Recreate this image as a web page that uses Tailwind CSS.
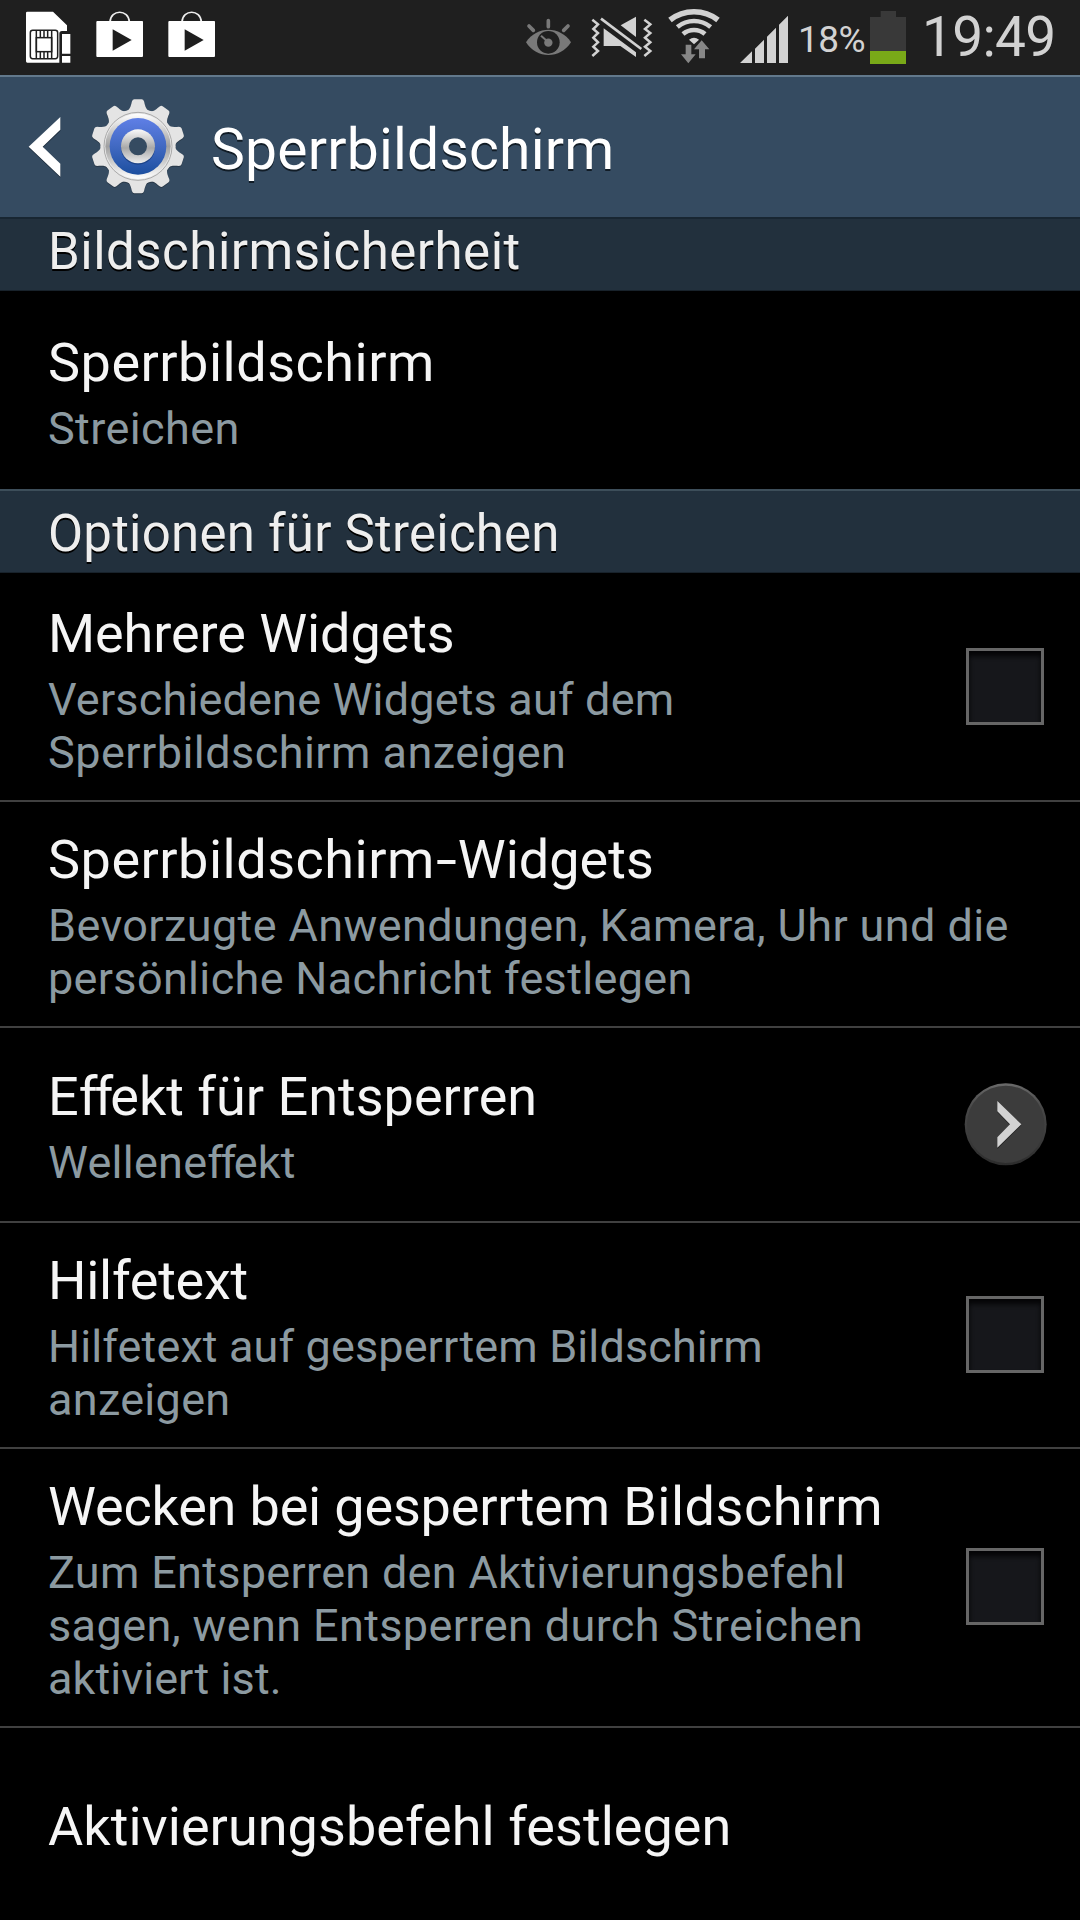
<!DOCTYPE html>
<html lang="de">
<head>
<meta charset="utf-8">
<title>Sperrbildschirm</title>
<script src="https://cdn.jsdelivr.net/npm/@tailwindcss/browser@4"></script>
</head>
<body class="bg-black">
<div class="w-[1080px] h-[1920px] overflow-hidden bg-black font-[Roboto,sans-serif] text-[#f5f5f5] flex flex-col">

  <!-- Status bar -->
  <div class="h-[75px] shrink-0 bg-[#1f1f1f] flex items-start text-[#d2d2d2]">
    <svg class="w-[90px] h-[75px]" viewBox="0 0 270 225">
      <path d="M82 35H159L201 76V93H186Q178 93 178 101V188H82Q78 188 78 184V39Q78 35 82 35Z" fill="#fff"/>
      <path d="M186 102H211V161H186ZM186 168H211V188H186Z" fill="#fff"/>
      <g fill="none" stroke="#1f1f1f" stroke-width="4.5"><rect x="91" y="91" width="82" height="85" rx="7"/><rect x="109" y="113" width="46" height="42"/><path d="M109 91V176M155 91V176M121 92V113M132 92V113M143 92V113M121 155V175M132 155V175M143 155V175"/></g>
    </svg>
    <svg class="w-[72px] h-[75px]" viewBox="270 0 216 225">
      <path d="M330 66C332 27 386 27 388 66" fill="none" stroke="#eee" stroke-width="5"/>
      <path d="M292 63H427Q429 63 429 66V168Q429 171 426 171H292Q289 171 289 168V66Q289 63 292 63ZM338 88V152L395 120Z" fill="#fff" fill-rule="evenodd"/>
    </svg>
    <svg class="w-[72px] h-[75px]" viewBox="270 0 216 225">
      <path d="M330 66C332 27 386 27 388 66" fill="none" stroke="#eee" stroke-width="5"/>
      <path d="M292 63H427Q429 63 429 66V168Q429 171 426 171H292Q289 171 289 168V66Q289 63 292 63ZM338 88V152L395 120Z" fill="#fff" fill-rule="evenodd"/>
    </svg>
    <svg class="w-[65px] h-[75px] ml-auto" viewBox="30 0 195 225">
      <path d="M48 127C80 77 151 77 183 127C151 178 80 178 48 127Z" fill="#797979"/>
      <circle cx="115" cy="127" r="34" fill="#1f1f1f"/>
      <circle cx="115" cy="128" r="12.5" fill="#797979"/>
      <path d="M110 122L93 107" stroke="#797979" stroke-width="6"/>
      <path d="M115 62V80M57 78L70 91M174 78L161 91" stroke="#797979" stroke-width="11" stroke-linecap="round"/>
    </svg>
    <svg class="w-[78px] h-[75px]" viewBox="225 0 234 225">
      <g fill="none" stroke="#d2d2d2" stroke-width="7.5"><path d="M247 59L264 73L250 87L264 99L250 113L264 127L250 140L264 153L247 168"/><path d="M403 59L421 73L405 87L421 99L405 113L421 127L405 140L421 153L403 168"/></g>
      <path d="M332 76L378 50V111Z" fill="#d2d2d2"/>
      <path d="M281 85L378 157V171L331 138H281Z" fill="#d2d2d2"/>
      <path d="M273 56L394 147" stroke="#d2d2d2" stroke-width="8"/>
    </svg>
    <svg class="w-[75px] h-[75px]" viewBox="459 0 225 225">
      <g fill="none" stroke="#d2d2d2"><path d="M480 60C522 27 582 27 624 60" stroke-width="17"/><path d="M502 81C532 57 572 57 602 81" stroke-width="14"/><path d="M519 102C538 86 566 86 585 102" stroke-width="14"/></g>
      <path d="M537 119Q552 107 567 119L552 133Z" fill="#d2d2d2"/>
      <path d="M575 119L600 146H586V176H565V146H551Z" fill="#1f1f1f"/>
      <path d="M527 134H544V163H557L535 190L513 163H527Z" fill="#878787"/>
      <path d="M575 121L598 148H585V175H567V148H552Z" fill="#878787"/>
    </svg>
    <svg class="w-[61px] h-[75px]" viewBox="684 0 183 225">
      <path d="M690 189L726 154V189ZM735 146L762 119V189H735ZM771 110L798 83V189H771ZM807 74L834 47V189H807Z" fill="#d2d2d2"/>
    </svg>
    <span class="w-[71px] pt-[18px] text-[37px] leading-[44px] tracking-[-0.6px] -indent-px">18%</span>
    <svg class="w-[50px] h-[75px]" viewBox="270 0 150 225">
      <path d="M302 33H348V51H378V153H270V51H302Z" fill="#393939"/><path d="M270 153H378V192H270Z" fill="#79a918"/>
    </svg>
    <span class="w-[160px] pt-[5px] pl-[2px] text-[55px] leading-[64px] tracking-[-0.7px]">19:49</span>
  </div>

  <!-- Action bar -->
  <div class="h-[142px] shrink-0 bg-[#354b61] border-t-2 border-[#62798c] flex items-center text-white">
    <svg class="w-[200px] h-[140px] shrink-0" viewBox="0 21 600 420">
      <defs>
        <linearGradient id="metal" x1="0" y1="0" x2="0" y2="1"><stop offset="0" stop-color="#fff"/><stop offset=".5" stop-color="#a0a0a0"/><stop offset="1" stop-color="#fff"/></linearGradient>
        <linearGradient id="blue" x1="0" y1="0" x2="0" y2="1"><stop offset="0" stop-color="#5f7fe6"/><stop offset=".5" stop-color="#4169c2"/><stop offset="1" stop-color="#1c4f9f"/></linearGradient>
        <linearGradient id="ring" x1="0" y1="0" x2="0" y2="1"><stop offset="0" stop-color="#fafafa"/><stop offset=".55" stop-color="#a8a8a8"/><stop offset="1" stop-color="#eee"/></linearGradient>
        <path id="tooth" d="M380 124C392 117 393 104 396 94Q398 88 403 88H425Q430 88 432 94C435 104 436 117 448 124V140H380Z"/>
      </defs>
      <path d="M86 233L181 145V183L128 233L181 284V323Z" fill="#1c2b3a"/>
      <path d="M86 230L181 141V179L128 230L181 281V320Z" fill="#fff"/>
      <g fill="#e4e4e4" style="filter:drop-shadow(0 2px 2px #0006)">
        <circle cx="414" cy="229" r="113"/>
        <use href="#tooth"/><use href="#tooth" transform="rotate(36 414 229)"/><use href="#tooth" transform="rotate(72 414 229)"/><use href="#tooth" transform="rotate(108 414 229)"/><use href="#tooth" transform="rotate(144 414 229)"/><use href="#tooth" transform="rotate(180 414 229)"/><use href="#tooth" transform="rotate(216 414 229)"/><use href="#tooth" transform="rotate(252 414 229)"/><use href="#tooth" transform="rotate(288 414 229)"/><use href="#tooth" transform="rotate(324 414 229)"/>
      </g>
      <circle cx="414" cy="229" r="102" fill="#e9e9e9" stroke="#aaa" stroke-width="3"/>
      <circle cx="414" cy="229" r="98" fill="url(#metal)"/>
      <circle cx="414" cy="229" r="85" fill="url(#blue)"/>
      <circle cx="414" cy="233" r="51" fill="#1d4489"/>
      <circle cx="414" cy="229" r="51" fill="url(#ring)"/>
      <circle cx="414" cy="229" r="27" fill="#354b61"/>
    </svg>
    <h1 class="pl-[11px] pt-1 text-[57px] leading-[67px] tracking-[0.2px] [text-shadow:0_2px_0_#111c26]">Sperrbildschirm</h1>
  </div>

  <!-- Screen security -->
  <h2 class="h-[74px] shrink-0 bg-[#22303d] border-t-2 border-t-[#182632] border-b border-b-[#18222b] pl-12 text-[51px] leading-[60px] tracking-[0.49px] pt-[3px] text-[#eee] [text-shadow:0_2px_0_#000]">Bildschirmsicherheit</h2>
  <div class="h-[198px] shrink-0 pl-12 pt-[5px] flex flex-col justify-center gap-2">
    <div class="text-[54px] leading-[63px] tracking-[0.5px]">Sperrbildschirm</div>
    <div class="text-[45px] leading-[53px] tracking-[0.4px] text-[#8c9aa1]">Streichen</div>
  </div>

  <!-- Swipe options -->
  <h2 class="h-[84px] shrink-0 bg-[#22303d] border-t-2 border-t-[#3d4e5a] border-b border-b-[#18222b] pl-12 text-[51px] leading-[60px] tracking-[0.22px] pt-[13px] text-[#eee] [text-shadow:0_2px_0_#000]">Optionen für Streichen</h2>
  <div class="h-[229px] shrink-0 border-b-2 border-[#404040] pl-12 pr-9 flex items-center justify-between">
    <div class="pt-2 flex flex-col gap-2">
      <div class="text-[54px] leading-[63px] tracking-[-0.08px]">Mehrere Widgets</div>
      <div class="text-[45px] leading-[53px] text-[#8c9aa1]"><span class="tracking-[0.17px]">Verschiedene Widgets auf dem</span><br><span class="tracking-[0.46px]">Sperrbildschirm anzeigen</span></div>
    </div>
    <div class="w-[78px] h-[77px] border-3 border-[#666] bg-[#16171b] shadow-[inset_0_5px_5px_#050506]"></div>
  </div>
  <div class="h-[226px] shrink-0 border-b-2 border-[#404040] pl-12 pr-9 flex items-center">
    <div class="pt-[5px] flex flex-col gap-2">
      <div class="text-[54px] leading-[63px]"><span class="tracking-[0.5px]">Sperrbildschirm</span><span class="inline-block px-1 scale-x-[1.4]">-</span>Widgets</div>
      <div class="text-[45px] leading-[53px] text-[#8c9aa1] whitespace-nowrap"><span class="tracking-[0.4px]">Bevorzugte Anwendungen, Kamera, Uhr und die</span><br><span class="tracking-[0.33px]">persönliche Nachricht festlegen</span></div>
    </div>
  </div>
  <div class="h-[195px] shrink-0 border-b-2 border-[#404040] pl-12 pr-[33px] flex items-center justify-between">
    <div class="pt-[5px] flex flex-col gap-2">
      <div class="text-[54px] leading-[63px]">E<span class="tracking-[-3px]">ff</span>ekt für Entsperren</div>
      <div class="text-[45px] leading-[53px] text-[#8c9aa1] tracking-[0.25px]">Wellene<span class="tracking-[-2.5px]">ff</span>ekt</div>
    </div>
    <svg class="w-[83px] h-[83px]" viewBox="71 68 249 249">
      <defs><linearGradient id="rim" x1="0" y1="0" x2="0" y2="1"><stop offset="0" stop-color="#6a6a6a"/><stop offset=".3" stop-color="#484848"/><stop offset=".7" stop-color="#3a3a3a"/><stop offset="1" stop-color="#2c2c2c"/></linearGradient></defs>
      <circle cx="196" cy="192" r="123" fill="url(#rim)"/><circle cx="196" cy="192" r="116" fill="#3c3c3c"/>
      <path d="M171 126L243 195L171 266V234L209 195L171 156Z" fill="#222"/>
      <path d="M171 122L243 192L171 262V231L209 192L171 153Z" fill="#d2d2d2"/>
    </svg>
  </div>
  <div class="h-[226px] shrink-0 border-b-2 border-[#404040] pl-12 pr-9 flex items-center justify-between">
    <div class="pt-[5px] flex flex-col gap-2">
      <div class="text-[54px] leading-[63px] tracking-[-0.27px]">Hilfetext</div>
      <div class="text-[45px] leading-[53px] text-[#8c9aa1]"><span class="tracking-[0.12px]">Hilfetext auf gesperrtem Bildschirm</span><br><span class="tracking-[0.3px]">anzeigen</span></div>
    </div>
    <div class="w-[78px] h-[77px] mb-0.5 border-3 border-[#666] bg-[#16171b] shadow-[inset_0_5px_5px_#050506]"></div>
  </div>
  <div class="h-[279px] shrink-0 border-b-2 border-[#404040] pl-12 pr-9 flex items-center justify-between">
    <div class="pt-[5px] flex flex-col gap-2">
      <div class="text-[54px] leading-[63px]"><span class="tracking-[-0.17px]">Wecken bei gesperrtem </span><span class="tracking-[0.5px]">Bildschirm</span></div>
      <div class="text-[45px] leading-[53px] text-[#8c9aa1]"><span class="tracking-[0.3px]">Zum Entsperren den Aktivierungsbefehl</span><br><span class="tracking-[0.39px]">sagen, wenn Entsperren durch Streichen</span><br><span class="tracking-[0.08px]">aktiviert ist.</span></div>
    </div>
    <div class="w-[78px] h-[77px] mb-0.5 border-3 border-[#666] bg-[#16171b] shadow-[inset_0_5px_5px_#050506]"></div>
  </div>
  <div class="h-[192px] shrink-0 pl-12 pt-[5px] flex items-center">
    <div class="text-[54px] leading-[63px] tracking-[0.04px]">Aktivierungsbefehl festlegen</div>
  </div>
</div>
</body>
</html>
